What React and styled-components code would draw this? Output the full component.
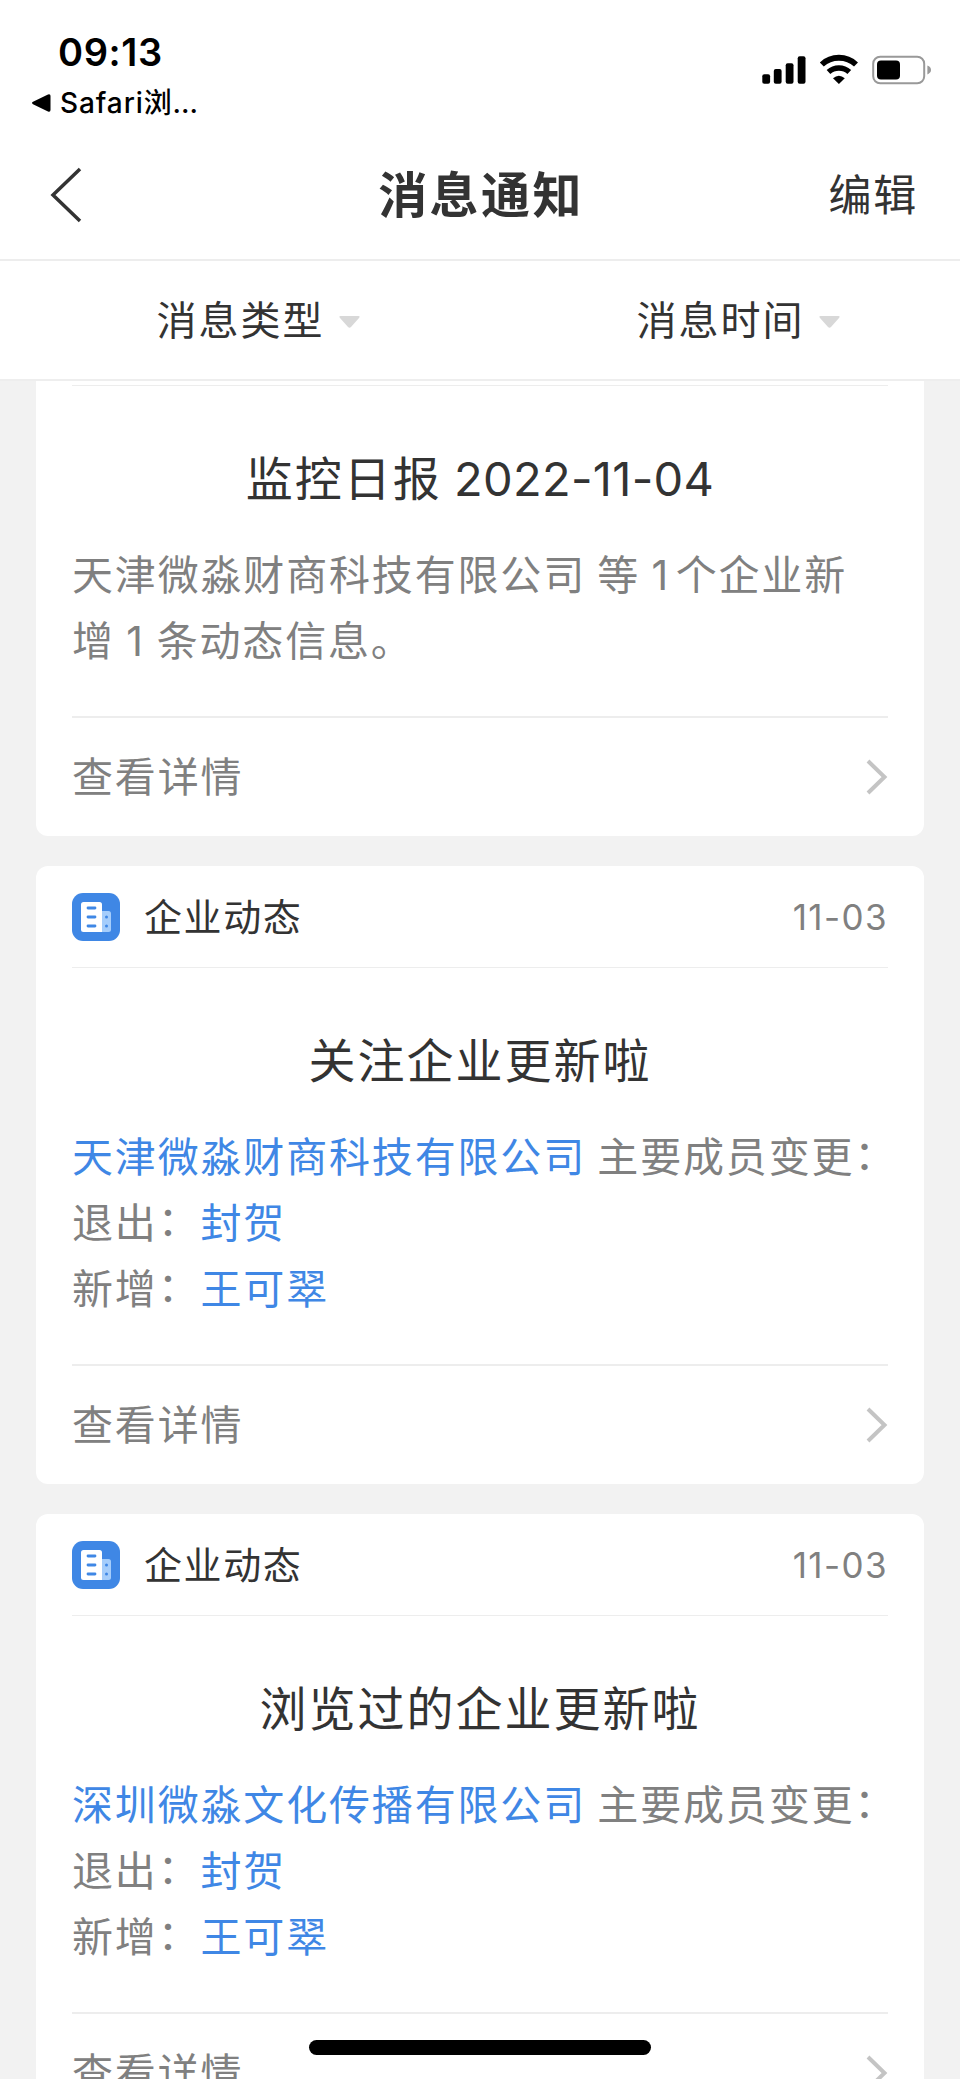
import React from 'react';
import styled, { createGlobalStyle } from 'styled-components';

const GlobalStyle = createGlobalStyle`
  * { box-sizing: border-box; }
  body {
    margin: 0;
    background: #f2f2f2;
    font-family: Inter, "Noto Sans CJK SC", sans-serif;
    color: #333;
  }
`;

const Screen = styled.div`
  position: relative;
  width: 960px;
  height: 2079px;
  overflow: hidden;
  display: flex;
  flex-direction: column;
  background: #f2f2f2;
`;

const StatusBar = styled.div`
  flex: none;
  height: 132px;
  padding: 29px 28px 0 32px;
  display: flex;
  justify-content: space-between;
  background: #fff;
  color: #000;
`;

const StatusLeft = styled.div`
  display: flex;
  flex-direction: column;
`;

const Clock = styled.div`
  padding-left: 26px;
  font-size: 38px;
  line-height: 46px;
  font-weight: 600;
  letter-spacing: 0.6px;
`;

const BackToApp = styled.div`
  display: flex;
  align-items: center;
  gap: 9px;
  margin-top: 8px;
  font-size: 28px;
  line-height: 40px;
  font-weight: 500;
  white-space: nowrap;
`;

const AppName = styled.span`
  letter-spacing: 0.9px;
`;

const StatusIcons = styled.svg`
  display: block;
  margin-top: 23px;
`;

const NavBar = styled.header`
  flex: none;
  height: 129px;
  padding: 0 42px 2px 50px;
  display: grid;
  grid-template-columns: 1fr auto 1fr;
  align-items: center;
  background: #fff;
  border-bottom: 2px solid #ededed;
`;

const NavTitle = styled.h1`
  margin: 3px 6px 0 0;
  font-size: 49px;
  line-height: 60px;
  font-weight: 700;
  letter-spacing: 2.4px;
`;

const EditAction = styled.div`
  justify-self: end;
  font-size: 43px;
  line-height: 60px;
  letter-spacing: 1.7px;
`;

const FilterBar = styled.div`
  flex: none;
  display: grid;
  grid-template-columns: 1fr 1fr;
  height: 120px;
  background: #fff;
  border-bottom: 2px solid #eee;
`;

const Filter = styled.div`
  display: flex;
  align-items: center;
  justify-content: center;
  padding: 1px 0 0 36px;
  gap: 14px;
  font-size: 40px;
  line-height: 48px;
  letter-spacing: 2px;

  svg {
    margin-top: 3px;
  }
`;

const CardList = styled.main`
  flex: 1;
  padding: 0 36px;
  display: flex;
  flex-direction: column;
  gap: 30px;
`;

const Card = styled.article`
  flex: none;
  padding: 0 36px;
  background: #fff;
  border-radius: ${(p) => (p.$cut ? '0 0 12px 12px' : '12px')};
`;

const CardHeader = styled.div`
  display: flex;
  align-items: center;
  height: ${(p) => (p.$cut ? '5px' : '102px')};
  border-bottom: 1px solid #ededed;
`;

const Category = styled.span`
  flex: 1;
  margin-left: 24px;
  font-size: 38px;
  line-height: 48px;
  letter-spacing: 1.6px;
`;

const DateText = styled.time`
  font-size: 35px;
  line-height: 48px;
  letter-spacing: 1.4px;
  color: #808080;
`;

const CardTitle = styled.h2`
  margin: 60px 0 30px;
  font-size: 47px;
  line-height: 66px;
  font-weight: 400;
  text-align: center;
  letter-spacing: 2px;
  word-spacing: -3px;
  white-space: nowrap;
`;

const Digits = styled.span`
  letter-spacing: 0.3px;
`;

const Line = styled.p`
  margin: 0;
  font-size: 41px;
  line-height: 66px;
  height: 66px;
  letter-spacing: 1.83px;
  word-spacing: -2px;
  color: #808080;
  white-space: nowrap;
`;

const Count = styled.span`
  letter-spacing: ${(p) => (p.$wide ? '7.5px' : '2.4px')};
`;

const Link = styled.span`
  color: #3f87e5;
`;

const Colon = styled.span`
  line-height: 0;
  vertical-align: 2px;
`;

const CardFooter = styled.div`
  display: flex;
  align-items: center;
  justify-content: space-between;
  height: 120px;
  margin-top: 42px;
  border-top: 2px solid #ededed;
  font-size: 41px;
  line-height: 48px;
  letter-spacing: 1.83px;
  color: #808080;
`;

const HomeIndicator = styled.div`
  position: absolute;
  left: 309px;
  bottom: 24px;
  width: 342px;
  height: 15px;
  border-radius: 8px;
  background: #000;
`;

const Caret = () => (
  <svg width="21" height="12" viewBox="0 0 21 12">
    <path d="M1.5 0H19.5Q21.5 .4 20 2L12 11Q10.500 12.600 9 11L1 2Q-.5 .4 1.500 0Z" fill="#d8d8d8" />
  </svg>
);

const BackArrow = () => (
  <svg width="32" height="56" viewBox="0 0 32 56">
    <path d="M30 2L3 28L30 54" fill="none" stroke="#333" strokeWidth="3.500" />
  </svg>
);

const Chevron = () => (
  <svg width="22" height="36" viewBox="0 0 22 36">
    <path d="M2 2L18.500 18L2 34" fill="none" stroke="#c4c4c4" strokeWidth="4" />
  </svg>
);

const BuildingIcon = () => (
  <svg width="48" height="48" viewBox="0 0 48 48">
    <rect width="48" height="48" rx="11" fill="#3f87e5" />
    <path d="M28 18H36.500Q39 18 39 20.500V36.500Q39 39 36.500 39H28Z" fill="#a5cdfb" />
    <path d="M11.500 9H27.500Q30 9 30 11.500V39H11.500Q9 39 9 36.500V11.500Q9 9 11.500 9Z" fill="#fff" />
    <path d="M16 15H23M16 24H23M16 33H23" stroke="#3f87e5" strokeWidth="2.800" strokeLinecap="round" />
    <circle cx="34.500" cy="24" r="1.500" fill="#3f87e5" />
    <circle cx="34.500" cy="33" r="1.500" fill="#3f87e5" />
  </svg>
);

const Phone = () => (
  <StatusIcons width="170" height="34" viewBox="762 52 170 34">
    <rect x="762.300" y="74.300" width="7.800" height="9.400" rx="2" />
    <rect x="773.800" y="69" width="7.800" height="14.700" rx="2" />
    <rect x="785.700" y="63.300" width="7.800" height="20.400" rx="2" />
    <rect x="797.700" y="56.300" width="7.800" height="27.400" rx="2" />
    <path d="M821.800 64.500A25 25 0 0 1 856 64.500" fill="none" stroke="#000" strokeWidth="5.800" />
    <path d="M828.500 72A15.500 15.500 0 0 1 849.300 72" fill="none" stroke="#000" strokeWidth="5.500" />
    <path d="M833 78.300Q838.900 73 844.800 78.300L838.900 84Z" />
    <rect x="873.200" y="56.700" width="51" height="26.600" rx="7" fill="none" stroke="#999" strokeWidth="2" />
    <rect x="877" y="60.600" width="23" height="18.800" rx="4" />
    <path d="M927.400 65.600Q931 67 931 70T927.400 74.400Z" fill="#999" />
  </StatusIcons>
);

const Footer = () => (
  <CardFooter>
    查看详情
    <Chevron />
  </CardFooter>
);

function CompanyCard({ title, company, date }) {
  return (
    <Card>
      <CardHeader>
        <BuildingIcon />
        <Category>企业动态</Category>
        <DateText>{date}</DateText>
      </CardHeader>
      <CardTitle>{title}</CardTitle>
      <Line><Link>{company}</Link> 主要成员变更<Colon>：</Colon></Line>
      <Line>退出<Colon>：</Colon><Link>封贺</Link></Line>
      <Line>新增<Colon>：</Colon><Link>王可翠</Link></Line>
      <Footer />
    </Card>
  );
}

export default function App() {
  return (
    <>
      <GlobalStyle />
      <Screen lang="zh-CN">
        <StatusBar>
          <StatusLeft>
            <Clock>09:13</Clock>
            <BackToApp>
              <svg width="19" height="18" viewBox="0 0 19 18">
                <path d="M1 7.800L16 .5Q18.500 -.3 18.500 2V16Q18.500 18.300 16 17.500L1 10.200Q-1 9 1 7.800Z" />
              </svg>
              <AppName>Safari浏…</AppName>
            </BackToApp>
          </StatusLeft>
          <Phone />
        </StatusBar>
        <NavBar>
          <BackArrow />
          <NavTitle>消息通知</NavTitle>
          <EditAction>编辑</EditAction>
        </NavBar>
        <FilterBar>
          <Filter>消息类型<Caret /></Filter>
          <Filter>消息时间<Caret /></Filter>
        </FilterBar>
        <CardList>
          <Card $cut>
            <CardHeader $cut />
            <CardTitle>监控日报 <Digits>2022-11-04</Digits></CardTitle>
            <Line>天津微淼财商科技有限公司 等 <Count $wide>1</Count>个企业新</Line>
            <Line>增 <Count>1</Count> 条动态信息。</Line>
            <Footer />
          </Card>
          <CompanyCard title="关注企业更新啦" company="天津微淼财商科技有限公司" date="11-03" />
          <CompanyCard title="浏览过的企业更新啦" company="深圳微淼文化传播有限公司" date="11-03" />
        </CardList>
        <HomeIndicator />
      </Screen>
    </>
  );
}
